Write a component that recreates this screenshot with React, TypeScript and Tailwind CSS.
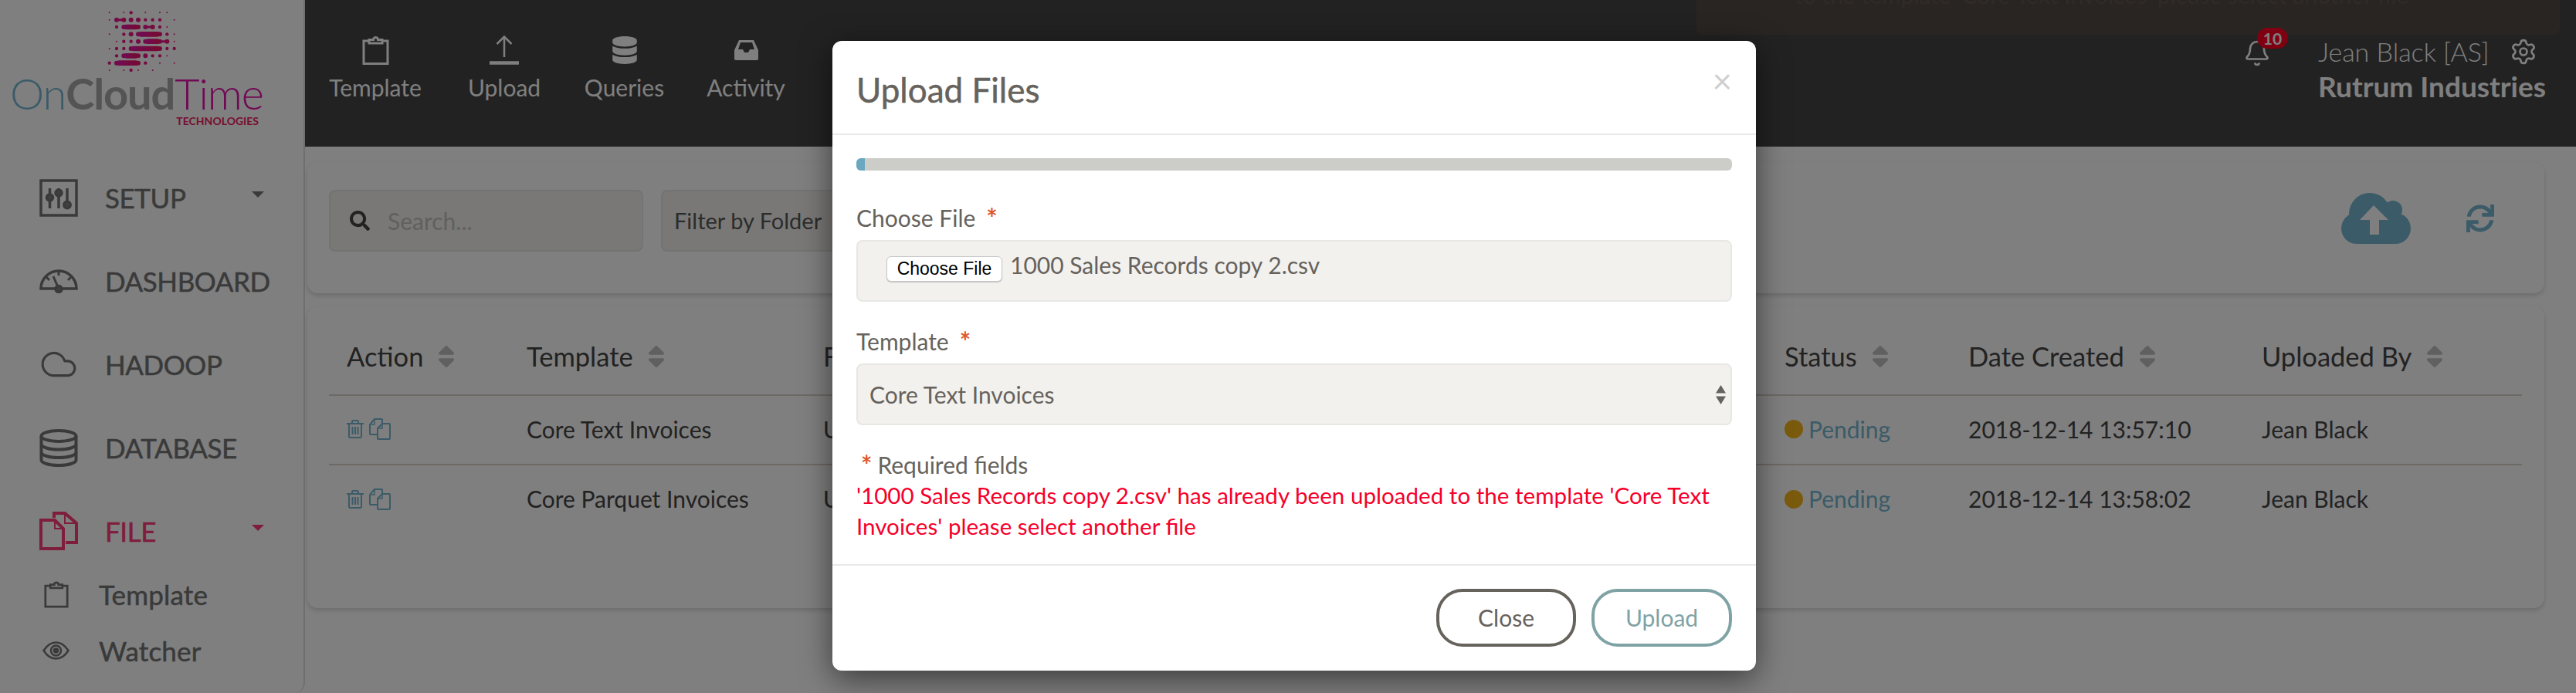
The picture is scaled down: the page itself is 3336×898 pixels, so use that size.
import React from "react";
import { FaSort, FaSearch, FaDatabase, FaSync } from "react-icons/fa";
import { Bell, Settings, Cloud, ArrowUp } from "lucide-react";

const Clipboard = ({ w, h }: { w: number; h: number }) => (
  <svg width={w} height={h} viewBox="0 0 35 37" fill="none" stroke="currentColor" strokeWidth="3">
    <path d="M9 6H2v29.5h31V6h-7" />
    <path d="M9 9V4.5h5.5a3 3 0 0 1 6 0H26V9Z" />
  </svg>
);

const Logo = () => {
  const xs = [419, 447, 475, 503, 531, 559, 587, 615, 643, 671];
  const ys = [38, 66, 94, 122, 150, 178, 206, 234, 262];
  // 0 none, 1 small, 2 medium, 3 large
  const rows = [
    [1, 0, 1, 2, 0, 1, 0, 1, 1, 0],
    [1, 3, 3, 3, 3, 2, 2, 2, 0, 1],
    [0, 2, 3, 3, 3, 3, 3, 2, 1, 0],
    [1, 0, 2, 3, 3, 3, 3, 3, 2, 1],
    [0, 1, 2, 2, 3, 3, 3, 3, 3, 1],
    [1, 2, 2, 3, 3, 3, 3, 3, 2, 2],
    [0, 2, 3, 3, 3, 3, 2, 2, 1, 0],
    [2, 3, 3, 3, 3, 2, 0, 1, 0, 1],
    [1, 0, 1, 2, 1, 0, 1, 0, 0, 0],
  ];
  const bars: [number, number, number, number][] = [
    [447, 475, 66, 5],
    [475, 531, 94, 16],
    [559, 587, 94, 5],
    [531, 615, 122, 16],
    [559, 615, 150, 16],
    [615, 643, 150, 5],
    [503, 615, 178, 16],
    [475, 531, 206, 16],
    [447, 531, 234, 16],
  ];
  const radii = [0, 3, 6.5, 9];
  return (
    <svg width="94" height="82" viewBox="405 25 282 246">
      <defs>
        <linearGradient id="lg" x1="0" x2="1" y1="0" y2="0">
          <stop offset="0" stopColor="#e018a8" />
          <stop offset="1" stopColor="#f01460" />
        </linearGradient>
      </defs>
      <g fill="url(#lg)">
        {rows.map((r, j) =>
          r.map((s, i) => (s ? <circle key={`${i}-${j}`} cx={xs[i]} cy={ys[j]} r={radii[s]} /> : null))
        )}
        {bars.map(([a, b, y, t], i) => (
          <rect key={i} x={a} y={y - t / 2 - 2} width={b - a} height={t + 4} rx={(t + 4) / 2} />
        ))}
      </g>
    </svg>
  );
};

const SetupIcon = () => (
  <svg width="50" height="49" viewBox="0 0 50 49" fill="none" stroke="currentColor">
    <rect x="2" y="2" width="46" height="45" strokeWidth="3.5" />
    <g strokeWidth="3.5">
      <path d="M13.5 12v26M25 12v26M36 12v20" />
      <circle cx="13.5" cy="24" r="4" fill="#808080" />
      <circle cx="25" cy="18" r="4" fill="#808080" />
      <circle cx="36" cy="33.5" r="4.2" fill="#808080" />
    </g>
  </svg>
);

const GaugeIcon = () => (
  <svg width="50" height="32" viewBox="0 0 50 32" fill="none" stroke="currentColor" strokeWidth="3.5">
    <path d="M2 26a23 23 0 0 1 46 0Z" />
    <path d="M18 10l6 14M25 2v7M9 11l4 4M41 11l-4 4" strokeWidth="3" />
    <circle cx="25" cy="26.5" r="4" fill="#808080" />
  </svg>
);

const DbOutline = () => (
  <svg width="50" height="49" viewBox="0 0 50 49" fill="none" stroke="currentColor" strokeWidth="4">
    <ellipse cx="25" cy="9" rx="22.5" ry="7" />
    <path d="M2.5 9v31c0 4 10 7 22.5 7s22.5-3 22.5-7V9" />
    <path d="M2.5 19.5c0 4 10 7 22.5 7s22.5-3 22.5-7M2.5 30c0 4 10 7 22.5 7s22.5-3 22.5-7" />
  </svg>
);

const FilesIcon = () => (
  <svg width="50" height="50" viewBox="0 0 50 50" fill="none" stroke="currentColor" strokeWidth="4">
    <path d="M19 8V2h14l15 13v25H34" />
    <path d="M33 2v13h15" strokeWidth="2" />
    <path d="M2 11h18l11 11v26H2Z" />
    <path d="M20 11v11h11" strokeWidth="2" />
  </svg>
);

const EyeIcon = () => (
  <svg width="35" height="24" viewBox="0 0 35 24" fill="none" stroke="currentColor" strokeWidth="2.5">
    <path d="M1.5 12C6 5 11 1.5 17.5 1.5S29 5 33.5 12C29 19 24 22.5 17.5 22.5S6 19 1.5 12Z" />
    <circle cx="17.5" cy="12" r="6.5" />
    <circle cx="17.5" cy="12" r="2.5" fill="currentColor" />
  </svg>
);

const Trash = () => (
  <svg width="22" height="24" viewBox="0 0 22 24" fill="none" stroke="currentColor" strokeWidth="2">
    <path d="M0 5h22M3 5v17a1.5 1.5 0 0 0 1.5 1h13a1.5 1.5 0 0 0 1.5-1V5M7 5V2.5A1.5 1.5 0 0 1 8.5 1h5A1.5 1.5 0 0 1 15 2.500V5" />
    <path d="M7.500 9v10M11 9v10M14.500 9v10" />
  </svg>
);

const Copy = () => (
  <svg width="28" height="28" viewBox="0 0 28 28" fill="none" stroke="currentColor" strokeWidth="2">
    <path d="M11 21H2a1 1 0 0 1-1-1V8l6-7h9a1 1 0 0 1 1 1v5" />
    <path d="M7 1v7H1" strokeWidth="1.500" />
    <path d="M11 13l6-6h9a1 1 0 0 1 1 1v18a1 1 0 0 1-1 1H12a1 1 0 0 1-1-1Z" />
    <path d="M17 7v6h-6" strokeWidth="1.500" />
  </svg>
);

const CloudUp = () => (
  <svg width="90" height="66" viewBox="0 0 90 66">
    <g fill="#76b6d0">
      <circle cx="37" cy="27" r="27" />
      <circle cx="67" cy="22" r="12" />
      <circle cx="20" cy="46" r="20" />
      <circle cx="70" cy="46" r="20" />
      <rect x="20" y="28" width="50" height="38" />
    </g>
    <path d="M42 16L61 35H49V54H37V35H24Z" fill="#ffffff" />
  </svg>
);

const Inbox = () => (
  <svg width="31" height="26" viewBox="0 0 31 26" fill="currentColor" fillRule="evenodd">
    <path d="M6 0H25L31 13V24a2 2 0 0 1-2 2H2a2 2 0 0 1-2-2V13ZM8 3L5 12H11L13 16H18L20 12H26L23 3Z" />
  </svg>
);

const UploadThin = () => (
  <svg width="38" height="38" viewBox="0 0 38 38" fill="none" stroke="currentColor">
    <path d="M19 28V1.500M9.500 11L19 1.500 28.500 11" strokeWidth="2.500" />
    <path d="M0 35.500H38" strokeWidth="4.500" />
  </svg>
);

const NavItem = ({
  icon,
  label,
  active,
  caret,
}: {
  icon: React.ReactNode;
  label: string;
  active?: boolean;
  caret?: boolean;
}) => (
  <div className={`flex h-[108px] items-center pl-[51px] pr-[51px] ${active ? "text-[#fc3a78]" : "text-[#747474]"}`}>
    <div className="flex w-[50px] justify-center">{icon}</div>
    <span className="ml-[35px] text-[35px] tracking-[-0.012em] [-webkit-text-stroke:0.5px_currentColor]">{label}</span>
    {caret && (
      <span className="ml-auto mb-[8px] h-0 w-0 border-x-[8px] border-t-[8px] border-x-transparent border-t-current" />
    )}
  </div>
);

const SubItem = ({ icon, label }: { icon: React.ReactNode; label: string }) => (
  <div className="flex h-[73px] items-center pb-[3px] pl-[55px] text-[#747474]">
    <div className="flex w-[35px] justify-center">{icon}</div>
    <span className="ml-[38px] text-[35px] tracking-[0.005em] [-webkit-text-stroke:0.5px_currentColor]">{label}</span>
  </div>
);

const TopItem = ({ icon, label, w }: { icon: React.ReactNode; label: string; w: string }) => (
  <div className={`flex flex-col items-center ${w}`}>
    <div className="flex h-[40px] items-center">{icon}</div>
    <span className="mt-[8px] whitespace-nowrap text-[30px] leading-[40px]">{label}</span>
  </div>
);

const Th = ({ label }: { label: string }) => (
  <th className="pl-[23px] text-left font-normal">
    <span className="inline-flex items-center gap-[12px]">
      {label}
      <FaSort className="text-[#c0c0c0]" size={36} />
    </span>
  </th>
);

const Row = ({ name, date, last }: { name: string; date: string; last?: boolean }) => (
  <tr className={`h-[90px] text-[30px] ${last ? "" : "border-b-2 border-[#dad2ca]"}`}>
    <td className="pb-[2px] pl-[23px]">
      <div className="flex items-center gap-[7px] text-[#76b6d0]">
        <Trash />
        <Copy />
      </div>
    </td>
    <td className="pb-[2px] pl-[23px]">{name}</td>
    <td className="pb-[2px] pl-[23px]">Uploads</td>
    <td className="pb-[2px] pl-[23px]">
      <span className="flex items-center gap-[7px] text-[#76b6d0]">
        <span className="h-[24px] w-[24px] rounded-full bg-[#f4b418]" />
        Pending
      </span>
    </td>
    <td className="pb-[2px] pl-[23px]">{date}</td>
    <td className="pb-[2px] pl-[23px]">Jean Black</td>
  </tr>
);

const Star = ({ gap }: { gap: string }) => (
  <span className={`${gap} text-[34px] font-bold leading-none text-[#e0582a]`}>*</span>
);

export default function App() {
  return (
    <div className="relative flex h-[898px] w-[3336px] overflow-hidden bg-white font-[family-name:Lato,sans-serif] text-[#444444]">
      {/* Sidebar */}
      <aside className="h-full w-[395px] shrink-0 overflow-hidden rounded-br-[14px] border-r-2 border-[#dedede] bg-white">
        <div className="h-[202px] pt-[12px]">
          <div className="ml-[137px] h-[84px]">
            <Logo />
          </div>
          <div className="ml-[13px] mt-[-4px] text-[56px] leading-[58px] tracking-[-0.02em] whitespace-nowrap">
            <span className="font-light text-[#76b6d0]">On</span>
            <span className="font-bold text-[#a8a8a8]">Cloud</span>
            <span className="font-light text-[#e012a8]">Time</span>
          </div>
          <div className="mr-[58px] text-right text-[14px] font-bold leading-[14px] text-[#f01a60]">TECHNOLOGIES</div>
        </div>
        <NavItem icon={<SetupIcon />} label="SETUP" caret />
        <NavItem icon={<GaugeIcon />} label="DASHBOARD" />
        <NavItem icon={<Cloud size={54} strokeWidth={1.500} />} label="HADOOP" />
        <NavItem icon={<DbOutline />} label="DATABASE" />
        <NavItem icon={<FilesIcon />} label="FILE" active caret />
        <div className="mt-[-7px]">
          <SubItem icon={<Clipboard w={32} h={35} />} label="Template" />
          <SubItem icon={<EyeIcon />} label="Watcher" />
          <div className="text-[#fc3a78]">
            <div className="flex h-[73px] items-center pl-[55px]">
              <ArrowUp size={46} />
              <span className="ml-[38px] text-[32px]">Upload</span>
            </div>
          </div>
        </div>
      </aside>

      {/* Main */}
      <div className="min-w-0 flex-1">
        <header className="flex h-[190px] bg-[#444444] pl-[31px] pr-[41px] pt-[45px] text-white">
          <div className="flex gap-[61px]">
            <TopItem w="w-[120px]" icon={<Clipboard w={35} h={37} />} label="Template" />
            <TopItem w="w-[92px]" icon={<UploadThin />} label="Upload" />
            <TopItem w="w-[97px]" icon={<FaDatabase size={36} />} label="Queries" />
            <TopItem w="w-[96px]" icon={<Inbox />} label="Activity" />
          </div>
          <div className="ml-auto flex items-start">
            <div className="relative z-10 mr-[61px] mt-[6px]">
              <Bell size={36} strokeWidth={1.800} />
              <span className="absolute left-[18px] top-[-15px] flex h-[27px] w-[40px] items-center justify-center rounded-full bg-[#ff0020] text-[21px] font-bold">
                10
              </span>
            </div>
            <div className="w-[293px]">
              <div className="flex items-center justify-between">
                <span className="whitespace-nowrap text-[34px] font-light leading-[44px]">Jean Black [AS]</span>
                <Settings size={36} strokeWidth={1.800} className="mr-[9px]" />
              </div>
              <div className="mt-[-1px] whitespace-nowrap text-[37px] font-bold leading-[48px]">Rutrum Industries</div>
            </div>
          </div>
        </header>

        <div className="ml-[3px] mr-[41px] mt-[20px]">
          <section className="flex h-[170px] items-center rounded-[14px] bg-white px-[28px] pb-[18px] shadow-[0_3px_6px_rgba(0,0,0,0.16)]">
            <div className="flex h-[80px] w-[407px] items-center rounded-[8px] border-2 border-[#e7e6e3] bg-[#f2f1ee] pl-[25px]">
              <FaSearch size={26} className="text-[#444444]" />
              <span className="ml-[23px] text-[30px] text-[#c0c0be]">Search...</span>
            </div>
            <div className="ml-[23px] flex h-[80px] w-[320px] items-center rounded-[8px] border-2 border-[#e7e6e3] bg-[#f2f1ee] pl-[15px] text-[29px] text-[#585858]">
              Filter by Folder
            </div>
            <div className="ml-auto mb-[6px] mr-[37px] flex items-center gap-[72px] text-[#76b6d0]">
              <CloudUp />
              <FaSync size={36} />
            </div>
          </section>

          <section className="mt-[17px] h-[391px] rounded-[14px] bg-white px-[28px] pt-[16px] shadow-[0_3px_6px_rgba(0,0,0,0.16)]">
            <table className="w-[2840px] table-fixed border-collapse">
              <colgroup>
                <col className="w-[233px]" />
                <col className="w-[384px]" />
                <col className="w-[1245px]" />
                <col className="w-[238px]" />
                <col className="w-[380px]" />
                <col className="w-[360px]" />
              </colgroup>
              <thead>
                <tr className="h-[99px] border-b-2 border-[#dad2ca] text-[34.5px]">
                  <Th label="Action" />
                  <Th label="Template" />
                  <Th label="File" />
                  <Th label="Status" />
                  <Th label="Date Created" />
                  <Th label="Uploaded By" />
                </tr>
              </thead>
              <tbody>
                <Row name="Core Text Invoices" date="2018-12-14 13:57:10" />
                <Row name="Core Parquet Invoices" date="2018-12-14 13:58:02" last />
              </tbody>
            </table>
          </section>
        </div>
      </div>

      {/* Toast behind backdrop */}
      <div className="absolute left-[2197px] top-0 h-[45px] w-[1118px] overflow-hidden rounded-b-[8px] bg-[#524a46] pl-[127px] text-[30px] leading-[24px] text-[#605753]">
        <div className="mt-[-19px] whitespace-nowrap">to the template 'Core Text Invoices' please select another file</div>
      </div>

      {/* Backdrop */}
      <div className="absolute inset-0 z-20 bg-black/50" />

      {/* Modal */}
      <div className="absolute left-[1078px] top-[53px] z-30 w-[1196px] rounded-[12px] bg-white text-[#66625c] shadow-[0_10px_40px_rgba(0,0,0,0.55)]">
        <div className="flex h-[122px] items-start justify-between border-b-2 border-[#e9e9e9] pl-[31px] pr-[31px]">
          <h2 className="mt-[38px] text-[44px] leading-[50px] [-webkit-text-stroke:0.5px_currentColor]">Upload Files</h2>
          <span className="mt-[29px] text-[44px] leading-[44px] text-[#cfcfcf]">×</span>
        </div>
        <div className="px-[31px]">
          <div className="mt-[30px] h-[16px] overflow-hidden rounded-[6px] bg-[#cccdc8]">
            <div className="h-full w-[11px] bg-[#6ba8c0]" />
          </div>

          <div className="mt-[41px] flex h-[40px] items-center text-[30px] leading-[40px]">
            Choose File <Star gap="ml-[14px]" />
          </div>
          <div className="mt-[9px] flex h-[80px] items-start rounded-[8px] border-2 border-[#e8e7e4] bg-[#f2f1ee] pl-[37px] text-[30px]">
            <button className="mt-[19px] flex h-[33px] w-[150px] items-center justify-center rounded-[6px] border border-[#c8c8c8] bg-white font-[family-name:'Liberation_Sans',sans-serif] text-[23px] leading-none text-black shadow-[0_1px_1px_rgba(0,0,0,0.2)]">
              Choose File
            </button>
            <span className="ml-[10px] mt-[10px] leading-[40px]">1000 Sales Records copy 2.csv</span>
          </div>

          <div className="mt-[31px] flex h-[40px] items-center text-[30px] leading-[40px]">
            Template <Star gap="ml-[14px]" />
          </div>
          <div className="mt-[9px] flex h-[80px] items-center justify-between rounded-[8px] border-2 border-[#e8e7e4] bg-[#f2f1ee] pl-[15px] pr-[6px] text-[30px]">
            <span>Core Text Invoices</span>
            <svg width="13" height="25" viewBox="0 0 13 25" fill="#66625c">
              <path d="M6.500 0L13 10.500H0ZM6.500 25L0 14.500H13Z" />
            </svg>
          </div>

          <div className="mt-[31px] flex h-[40px] items-center text-[30px] leading-[40px]">
            <Star gap="ml-[6px]" />
            <span className="ml-[7px]">Required fields</span>
          </div>
          <div className="w-[1134px] text-[29.6px] leading-[40px] text-[#f5002a]">
            '1000 Sales Records copy 2.csv' has already been uploaded to the template 'Core Text Invoices' please select another file
          </div>
        </div>
        <div className="mt-[29px] flex justify-end gap-[20px] border-t-2 border-[#e9e9e9] px-[31px] pb-[31px] pt-[30px] text-[30px]">
          <button className="h-[75px] w-[181px] rounded-[34px] border-4 border-[#66625c] text-[#66625c]">Close</button>
          <button className="h-[75px] w-[182px] rounded-[34px] border-4 border-[#7fa3a5] text-[#7fa3a5]">Upload</button>
        </div>
      </div>
    </div>
  );
}
